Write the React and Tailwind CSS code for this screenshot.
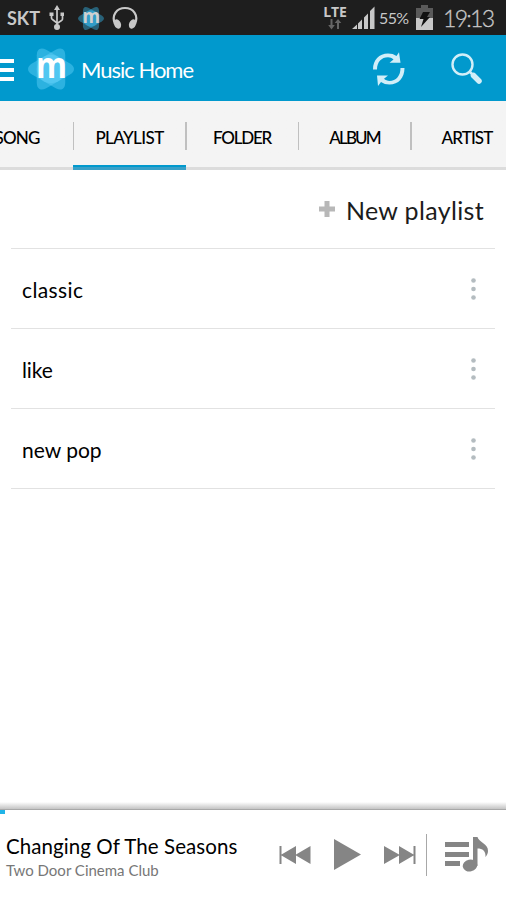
import React from 'react';

const tabs = [
    { label: 'SONG', spacing: 'tracking-[-0.8px]' },
    { label: 'PLAYLIST', spacing: 'tracking-[-0.6px]' },
    { label: 'FOLDER', spacing: 'tracking-[-1.2px]' },
    { label: 'ALBUM', spacing: 'tracking-[-1.9px]' },
    { label: 'ARTIST', spacing: 'tracking-[-0.9px]' },
];
const activeTab = 'PLAYLIST';

const playlists = [
    { name: 'classic', spacing: 'tracking-[0.4px]' },
    { name: 'like', spacing: 'tracking-[-0.1px]' },
    { name: 'new pop', spacing: 'tracking-normal' },
];

const petalPath = 'M0 22Q0 19 4 16.500L16 9.500Q23 6 30 9.500L42 16.500Q46 19 46 22Q46 25 42 27.500L30 34.500Q23 38 16 34.500L4 27.500Q0 25 0 22Z';

function Logo({ className, petal, letter }) {
    return (
        <svg viewBox="0 0 46 44" className={className}>
            <g fill={petal} fillOpacity="0.450">
                <path d={petalPath} />
                <path d={petalPath} transform="rotate(60 23 22)" />
                <path d={petalPath} transform="rotate(-60 23 22)" />
            </g>
            <text x="8" y="30.500" fill={letter} textLength="31" lengthAdjust="spacingAndGlyphs" className="font-['Open_Sans'] text-[35px] font-bold">m</text>
        </svg>
    );
}

function StatusBar() {
    return (
        <div className="flex h-[35px] items-center bg-[#1e1e1e] pl-[7px] text-[#c8c8c8]">
            <span className="w-[42px] text-[18px] font-bold leading-none">SKT</span>
            {/* USB */}
            <svg viewBox="0 0 16 26" className="mt-px h-[26px] w-4" fill="none" stroke="#c8c8c8" strokeWidth="1.700">
                <path d="M8 4V23M2.500 9v4q0 1 1 1.500L8 18M13.500 10v4q0 1-1 1.500L8 18.500" />
                <path d="M8 0l3 5H5zM5 22a3 3 0 1 0 6 0 3 3 0 1 0-6 0M.500 7.500h4v3.500H.500zM11.500 7.500H15V11h-3.500z" fill="#c8c8c8" stroke="none" />
            </svg>
            <Logo className="ml-[13px] mt-px h-[25px] w-[26px] overflow-visible" petal="#35b5e8" letter="#d0d0d0" />
            {/* Headphones */}
            <svg viewBox="0 0 26 24" className="ml-2 mt-px h-6 w-[26px]">
                <path d="M3 18C-1 9 5 2 13 2s14 7 10 16" fill="none" stroke="#c8c8c8" strokeWidth="2.200" />
                <ellipse cx="5.500" cy="18" rx="3.400" ry="4.900" transform="rotate(-22 5.500 18)" fill="#c8c8c8" />
                <ellipse cx="20.500" cy="18" rx="3.400" ry="4.900" transform="rotate(22 20.500 18)" fill="#c8c8c8" />
            </svg>
            <div className="ml-auto mr-[5px] flex w-[24px] flex-col items-center">
                <span className="font-['Open_Sans'] text-[14px] font-bold leading-[14px] tracking-[-0.2px]">LTE</span>
                <svg viewBox="0 0 14 11" className="h-[11px] w-[14px]" fill="#666">
                    <path d="M2.500 0h2v6h2.300l-3.300 4.500L.200 6h2.300zM9 10h2V4h2.300L10 0 6.700 4H9z" />
                </svg>
            </div>
            <svg viewBox="0 0 23 23" className="h-[23px] w-[23px]" fill="#c8c8c8">
                <path d="M0 23l5-4.500V23zM6 17.500l4-4V23H6zM12 11.500l4-4V23h-4zM18 5l4.500-4.500V23H18z" />
            </svg>
            <span className="ml-[4px] w-[37px] whitespace-nowrap text-[16px] leading-none tracking-[-0.6px]">55%</span>
            <svg viewBox="0 0 18 26" className="h-[26px] w-[18px]">
                <path d="M5 0h7v3h5v10H0V3h5z" fill="#5a5a5a" />
                <path d="M0 13h17v12H0z" fill="#c8c8c8" />
                <path d="M7 7h7l-3 5h3L5 22l2.500-8H3.500z" fill="#111" />
            </svg>
            <span className="ml-[9px] mr-[11px] w-[52px] whitespace-nowrap pt-px text-[23px] font-light leading-none tracking-[-1.7px] [-webkit-text-stroke:0.3px_#c8c8c8]">19:13</span>
        </div>
    );
}

function AppBar() {
    return (
        <header className="flex h-[66px] items-center bg-[#0199cd] text-white">
            <div className="mt-[4px] flex w-[14px] flex-col gap-[5px]">
                <span className="h-[4px] bg-white" />
                <span className="h-[4px] bg-white" />
                <span className="h-[4px] bg-white" />
            </div>
            <Logo className="ml-[14px] mt-[2px] h-[44px] w-[46px] overflow-visible" petal="#62d0f8" letter="#fff" />
            <h1 className="ml-[7px] pt-[3px] text-[22px] leading-none tracking-[-1px]">Music Home</h1>
            {/* Refresh */}
            <svg viewBox="0 0 32 34" className="ml-auto mt-px h-[34px] w-8" fill="#d2eef8">
                <path d="M0 17.500C0 8 6 1.500 15 1.500c3.500 0 6 .8 8.500 2.500L26 .300l1.500 10.400H16.500L20.500 7.500C19 6 17 5.300 15 5.300 8.500 5.300 4 10 4 17.500z" />
                <path d="M31.500 16C31.500 26 25.500 32.500 16.500 32.500c-3.500 0-6-.8-8.500-2.500L5 34 4 23.500h11l-4 3.300c1.500 1.500 3.500 2.100 5.500 2.100 6.500 0 11-4.900 11-12.900z" />
            </svg>
            {/* Search */}
            <svg viewBox="0 0 32 32" className="ml-[46px] mr-[23px] mt-[2px] h-8 w-8">
                <circle cx="11.500" cy="11.500" r="10" fill="none" stroke="#d2eef8" strokeWidth="2.400" />
                <path d="M18.500 18.500l3 3" stroke="#d2eef8" strokeWidth="2.500" />
                <path d="M22.500 22.500l5.500 5.500" stroke="#d2eef8" strokeWidth="5.500" strokeLinecap="round" />
            </svg>
        </header>
    );
}

function Tabs() {
    return (
        <nav className="h-[69px] bg-linear-to-b from-[#f4f4f4] from-[66px] to-[#dcdcdc] to-[66px]">
            <div className="flex w-[506px] justify-center overflow-hidden">
                <div className="mr-[22px] flex shrink-0">
                    {tabs.map(({ label, spacing }) => (
                        <div key={label} className="relative flex h-[69px] w-[112.500px] shrink-0 items-center">
                            <span className={`w-full pb-[3px] pt-[6px] text-center text-[17px] font-medium leading-none text-black ${spacing}`}>{label}</span>
                            <span className="absolute right-[-1px] top-[21px] h-[28px] w-[1.500px] bg-[#c0c0c0]" />
                            {label === activeTab && (
                                <span className="absolute bottom-0 left-0 h-[5px] w-full border-b-[3px] border-[#38a0c8] bg-[#0199cd]" />
                            )}
                        </div>
                    ))}
                </div>
            </div>
        </nav>
    );
}

function Player() {
    return (
        <footer>
            <div className="h-[7px] bg-linear-to-b from-white to-[#c4c4c4]" />
            <div className="h-px bg-[#a8a8a8]" />
            <div className="h-[4px] w-[5px] bg-[#20b4e8]" />
            <div className="flex h-[86px] items-center pb-[5px] pl-[6px]">
                <div className="w-[273px] whitespace-nowrap pt-[5px]">
                    <p className="text-[20.500px] leading-[26px] tracking-[0.07px] text-black">Changing Of The Seasons</p>
                    <p className="text-[15px] leading-[22px] text-[#777]">Two Door Cinema Club</p>
                </div>
                <svg viewBox="0 0 32 18" className="h-[18px] w-8" fill="#858585">
                    <path d="M.500 0h2v8.500L17 0v8.500L31.500 0v18L17 9.500V18L2.500 9.500V18h-2z" />
                </svg>
                <svg viewBox="0 0 27 31" className="ml-[23px] h-[31px] w-[27px]" fill="#858585">
                    <path d="M0 0l27 15.500L0 31z" />
                </svg>
                <svg viewBox="0 0 32 18" className="ml-[23px] h-[18px] w-8" fill="#858585">
                    <path d="M31.500 0h-2v8.500L15 0v8.500L0 0v18l15-8.500V18l14.500-8.500V18h2z" />
                </svg>
                <span className="ml-[10px] h-[42px] w-px bg-[#a8a8a8]" />
                <svg viewBox="0 0 44 35" className="ml-[18px] h-[35px] w-11" fill="#858585">
                    <path d="M0 5h24v5H0zM0 15h24v5H0zM0 24h15v5H0z" />
                    <ellipse cx="25" cy="28.500" rx="7.300" ry="6" transform="rotate(-12 25 28.500)" />
                    <path d="M28 0h4.500c1 5 11 7 10.500 14 0 2-.8 4-2.500 6 .5-6-3-8.500-8-8.500V29H28z" />
                </svg>
            </div>
        </footer>
    );
}

export default function App() {
    return (
        <div className="flex h-[900px] w-[506px] flex-col overflow-hidden bg-white font-['Lato',sans-serif]">
            <StatusBar />
            <AppBar />
            <Tabs />
            <main className="flex-1 px-[11px]">
                <button className="flex h-[79px] w-full items-center justify-end border-b border-[#e2e2e2] pr-[11px] pt-[3px]">
                    <svg viewBox="0 0 16 16" className="mb-[3px] mr-[11px] h-4 w-4" fill="#b8b8b8">
                        <path d="M5.500 0h5v5.500H16v5h-5.500V16h-5v-5.500H0v-5h5.500z" />
                    </svg>
                    <span className="text-[25px] leading-none tracking-[0.350px] text-[#1c1c1c]">New playlist</span>
                </button>
                {playlists.map(({ name, spacing }) => (
                    <div key={name} className="flex h-[80px] items-center justify-between border-b border-[#e2e2e2] pl-[11px] pr-[19px]">
                        <span className={`pt-[2px] text-[21px] leading-none text-black ${spacing}`}>{name}</span>
                        <svg viewBox="0 0 5 22" className="h-[22px] w-[5px]" fill="#b4bcc0">
                            <circle cx="2.500" cy="2.500" r="2.300" />
                            <circle cx="2.500" cy="11" r="2.300" />
                            <circle cx="2.500" cy="19.500" r="2.300" />
                        </svg>
                    </div>
                ))}
            </main>
            <Player />
        </div>
    );
}
